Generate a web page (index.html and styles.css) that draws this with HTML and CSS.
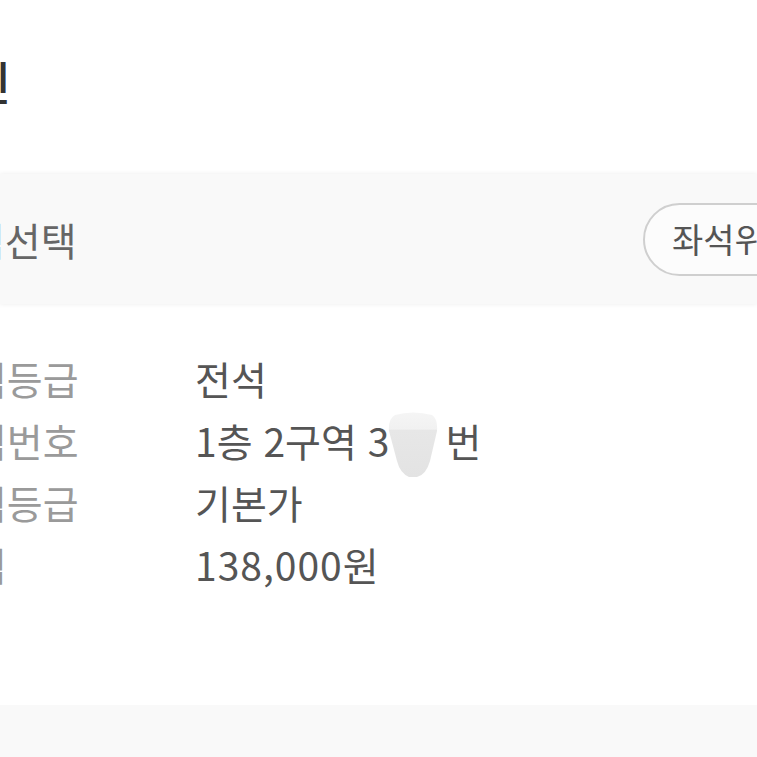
FILE: index.html
```html
<!DOCTYPE html>
<html lang="ko">
<head>
<meta charset="utf-8">
<link rel="stylesheet" href="styles.css">
</head>
<body>
<div class="page">
  <header class="head">
    <h1 class="title">예매확인</h1>
  </header>
  <section class="band">
    <h2 class="band-title">좌석선택</h2>
    <button class="pill">좌석위치</button>
  </section>
  <dl class="info">
    <dt>좌석등급</dt><dd>전석</dd>
    <dt>좌석번호</dt><dd>1층 2구역 3<span class="mask"><svg class="mask-blob" width="52" height="68" viewBox="0 0 52 68"><defs><linearGradient id="g" x1="0" y1="0" x2="0" y2="1"><stop offset="0" stop-color="#f5f5f5"/><stop offset="0.26" stop-color="#f1f1f1"/><stop offset="0.27" stop-color="#e7e7e7"/><stop offset="1" stop-color="#e3e3e3"/></linearGradient></defs><path d="M8 4 Q26 -1 45 4 Q51 8 50 20 L43 50 Q39 64 30 66 L22 66 Q13 62 10 50 L2 20 Q1 8 8 4 Z" fill="url(#g)"/></svg></span>번</dd>
    <dt>가격등급</dt><dd>기본가</dd>
    <dt>가격</dt><dd class="price">138,000원</dd>
  </dl>
  <div class="foot"></div>
</div>
</body>
</html>
```
FILE: styles.css
```css
html, body {
  margin: 0;
  padding: 0;
  background: #ffffff;
  overflow: hidden;
}
body {
  font-family: "Noto Sans CJK KR", "Noto Sans", sans-serif;
  width: 757px;
  height: 757px;
}
.page {
  display: flex;
  flex-direction: column;
  height: 757px;
}
.head {
  height: 174px;
  width: 11px;
  display: flex;
  justify-content: flex-end;
  align-items: flex-start;
  padding-top: 50px;
  box-sizing: border-box;
}
.title {
  flex: none;
  margin: 0;
  font-size: 46px;
  font-weight: 500;
  color: #333;
  line-height: 60px;
  white-space: nowrap;
}
.band {
  height: 130px;
  flex: none;
  background: #f9f9f9;
  box-shadow: 0 0 5px rgba(0,0,0,0.08);
  display: flex;
  align-items: center;
  box-sizing: border-box;
}
.band-title {
  margin: 0 0 0 -67px;
  font-size: 39px;
  font-weight: 400;
  color: #666;
  line-height: 50px;
  white-space: nowrap;
}
.pill {
  margin-left: auto;
  margin-right: -80px;
  width: 194px;
  height: 73px;
  border: 2px solid #cfcfcf;
  border-radius: 37px;
  background: #fcfcfc;
  font-family: inherit;
  font-size: 34px;
  color: #555;
  text-align: left;
  padding: 0 0 0 27px;
  box-sizing: border-box;
  line-height: 1;
  white-space: nowrap;
}
.info {
  margin: 43px 0 0 -65px;
  display: grid;
  grid-template-columns: 260px auto;
  grid-auto-rows: 62px;
  align-items: center;
  font-size: 39px;
  line-height: 62px;
}
.info dt {
  color: #9a9a9a;
  white-space: nowrap;
}
.info dd {
  margin: 0;
  color: #555;
  white-space: nowrap;
}
.info .price {
  letter-spacing: 1px;
}
.mask {
  display: inline-block;
  position: relative;
  vertical-align: top;
  width: 56px;
  height: 62px;
}
.mask-blob {
  position: absolute;
  left: -2px;
  top: 2px;
}
.foot {
  margin-top: auto;
  height: 52px;
  background: #f9f9f9;
}
```
